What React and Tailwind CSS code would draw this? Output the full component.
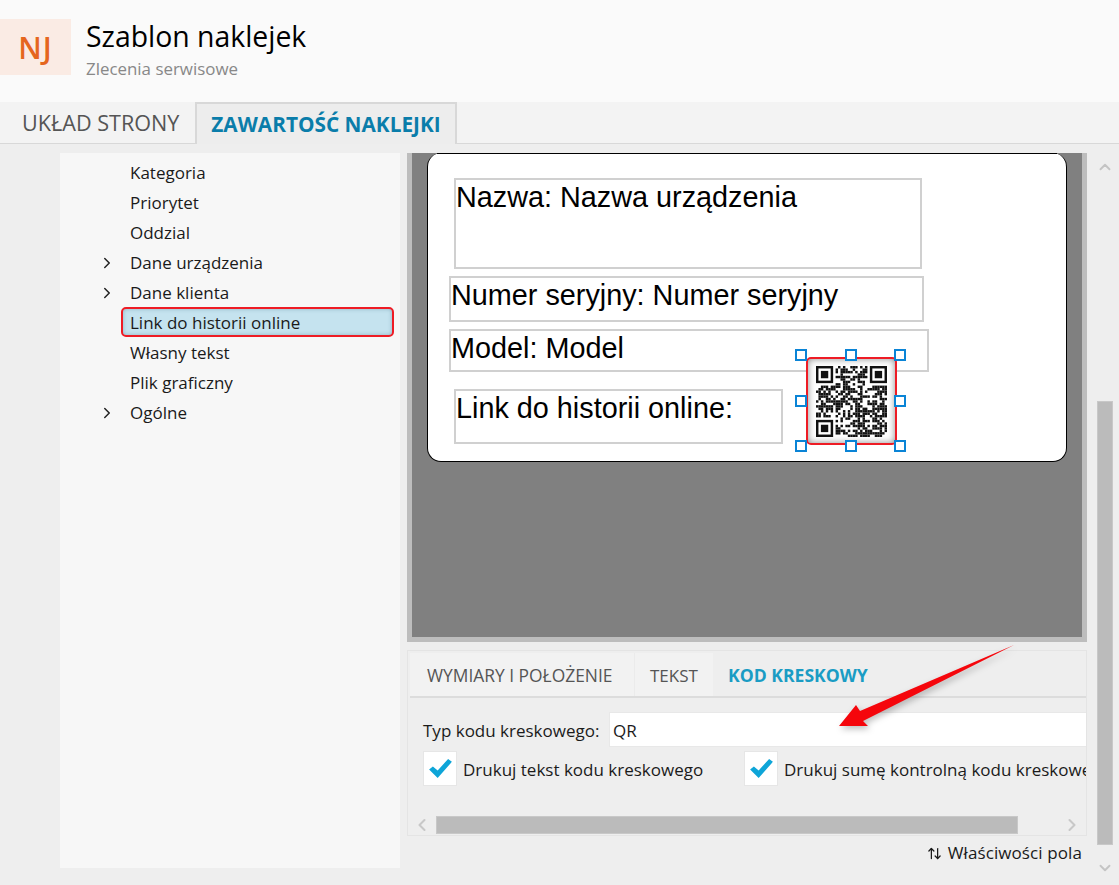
import { ChevronRight, ChevronLeft, ChevronUp, ChevronDown, ArrowUpDown } from "lucide-react";

const TREE = [
  { label: "Kategoria" },
  { label: "Priorytet" },
  { label: "Oddzial" },
  { label: "Dane urządzenia", arrow: true },
  { label: "Dane klienta", arrow: true },
  { label: "Link do historii online", selected: true },
  { label: "Własny tekst" },
  { label: "Plik graficzny" },
  { label: "Ogólne", arrow: true },
];

const FIELDS = [
  { text: "Nazwa: Nazwa urządzenia", cls: "left-[42px] top-[25px] w-[468px] h-[91px]" },
  { text: "Numer seryjny: Numer seryjny", cls: "left-[37px] top-[123px] w-[475px] h-[46px]" },
  { text: "Model: Model", cls: "left-[37px] top-[176px] w-[480px] h-[43px]" },
  { text: "Link do historii online:", cls: "left-[42px] top-[236px] w-[329px] h-[55px]" },
];

const HANDLES = [
  "left-[383px] top-[196px]", "left-[433px] top-[196px]", "left-[482px] top-[196px]",
  "left-[383px] top-[242px]", "left-[482px] top-[242px]",
  "left-[383px] top-[287px]", "left-[433px] top-[287px]", "left-[482px] top-[287px]",
];

// QR modules: fixed finder squares, noise for the rest
function qrModules() {
  const size = 29;
  const cells = [];
  let seed = 73;
  const inFinder = (x, y) =>
    (x < 8 && y < 8) || (x > 20 && y < 8) || (x < 8 && y > 20);
  for (let y = 0; y < size; y++) {
    for (let x = 0; x < size; x++) {
      seed = (seed * 1103515245 + 12345) & 0x7fffffff;
      const on = ((seed >> 16) & 255) < 135 + (x > 14 && y > 12 ? 30 : 0);
      if (!inFinder(x, y) && on) cells.push([x, y]);
    }
  }
  return cells;
}

function Finder({ x, y }) {
  return (
    <g>
      <rect x={x + 0.5} y={y + 0.5} width="6" height="6" fill="none" stroke="#111" strokeWidth="1" />
      <rect x={x + 2} y={y + 2} width="3" height="3" fill="#111" />
    </g>
  );
}

function QrCode() {
  return (
    <svg viewBox="0 0 29 29" className="w-[71px] h-[71px] blur-[0.5px]">
      {qrModules().map(([x, y]) => (
        <rect key={`${x}-${y}`} x={x} y={y} width="1" height="1" fill="#111" />
      ))}
      <Finder x={0} y={0} />
      <Finder x={22} y={0} />
      <Finder x={0} y={22} />
    </svg>
  );
}

function Check() {
  return (
    <div className="w-[34px] h-[35px] bg-white border border-[#e6e6e6] flex items-center justify-center shrink-0">
      <svg viewBox="0 0 24 20" className="w-[23px] h-[19px]">
        <path d="M0 11 L4 8 L9 12 L20 0 L24 3 L9 20 Z" fill="#0ea5d8" />
      </svg>
    </div>
  );
}

function Sticker() {
  return (
    <div className="relative h-full bg-[#808080] overflow-hidden">
      <div className="absolute left-[15px] top-0 w-[640px] h-[309px] bg-white border border-black border-t-0 rounded-[14px]" />
      <div className="absolute left-[25px] top-0 w-[620px] h-[1px] bg-black" />
      {FIELDS.map((f) => (
        <div
          key={f.text}
          className={`absolute ${f.cls} border-2 border-[#d0d0d0] pt-[2px] text-[28.8px] leading-[31px] text-black font-['Liberation_Sans',sans-serif] whitespace-nowrap`}
        >
          {f.text}
        </div>
      ))}
      <div className="absolute left-[394px] top-[204px] w-[91px] h-[88px] bg-white border-2 border-[#ee1c25] rounded-[5px] flex items-center justify-center shadow-[inset_0_0_7px_#8a8a8a]">
        <QrCode />
      </div>
      {HANDLES.map((h) => (
        <div key={h} className={`absolute ${h} w-[12px] h-[12px] bg-white border-2 border-[#0a84d6]`} />
      ))}
    </div>
  );
}

function BottomPanel() {
  return (
    <div className="h-[186px] border border-[#e4e4e4] flex flex-col overflow-hidden text-[#1b1b1b]">
      <div className="h-[47px] pt-[2px] flex border-b-2 border-[#dcdcdc] text-[17.4px] ml-[2px] shrink-0">
        <div className="w-[224px] bg-[#f2f2f2] flex items-center pl-[17px] pt-[2px] text-[#555] whitespace-nowrap">
          WYMIARY I POŁOŻENIE
        </div>
        <div className="w-[79px] bg-[#f2f2f2] flex items-center pl-[15px] pt-[2px] text-[#555] text-[17px] border-l border-[#ebebeb]">TEKST</div>
        <div className="flex items-center pl-[15px] pt-[2px] font-bold text-[#1a9cc4] whitespace-nowrap text-[17.6px]">KOD KRESKOWY</div>
      </div>
      <div className="flex-1 overflow-hidden pl-[15px] pt-[14px]">
        <div className="flex items-center h-[35px]">
          <span className="text-[17px] w-[186px] shrink-0 whitespace-nowrap pt-[2px]">Typ kodu kreskowego:</span>
          <div className="w-[500px] h-[35px] bg-white border border-[#e8e8e8] flex items-center pl-[3px] pt-[2px] text-[17px] shrink-0">QR</div>
        </div>
        <div className="flex items-center mt-[4px] text-[17px] whitespace-nowrap">
          <div className="flex items-center w-[321px] shrink-0">
            <Check />
            <span className="ml-[6px] pt-[2px]">Drukuj tekst kodu kreskowego</span>
          </div>
          <Check />
          <span className="ml-[6px] pt-[2px]">Drukuj sumę kontrolną kodu kreskowego</span>
        </div>
      </div>
      <div className="h-[18px] flex items-center mb-[1px] text-[#c8c8c8] shrink-0">
        <div className="w-[28px] flex justify-center"><ChevronLeft size={20} strokeWidth={2.5} /></div>
        <div className="w-[582px] h-[18px] bg-[#bbbbbb] border border-[#c8c8c8]" />
        <div className="flex-1 flex justify-end pr-[4px]"><ChevronRight size={20} strokeWidth={2.5} /></div>
      </div>
    </div>
  );
}

export default function App() {
  return (
    <div className="relative h-[885px] overflow-hidden bg-[#eeeeee] flex flex-col font-['Open_Sans',sans-serif]">
      {/* header */}
      <div className="h-[102px] bg-[#fafafa] flex items-start pt-[19px] shrink-0">
        <div className="w-[71px] h-[56px] bg-[#faebe4] flex items-center justify-center text-[30px] tracking-[1px] font-semibold text-[#e5661e]">
          NJ
        </div>
        <div className="ml-[15px] -mt-[3px]">
          <div className="text-[28.4px] leading-[40px] text-black">Szablon naklejek</div>
          <div className="text-[16.9px] leading-[22px] text-[#888888] mt-[2px]">Zlecenia serwisowe</div>
        </div>
      </div>

      {/* main tabs */}
      <div className="h-[42px] bg-[#f3f3f3] border-b border-[#d8d8d8] flex shrink-0">
        <div className="w-[195px] pl-[22px] pt-[2px] flex items-center text-[21.6px] text-[#555] whitespace-nowrap">UKŁAD STRONY</div>
        <div className="w-[262px] h-[42px] bg-[#ededed] border-2 border-b-0 border-[#d8d8d8] pt-[1px] flex items-center justify-center text-[20.8px] font-bold text-[#0a7daa] whitespace-nowrap">
          ZAWARTOŚĆ NAKLEJKI
        </div>
      </div>

      <div className="relative flex-1 flex pl-[60px] pt-[9px]">
        {/* tree */}
        <div className="w-[340px] h-[715px] bg-[#f7f7f7] pt-[5px] shrink-0">
          {TREE.map((t) => (
            <div key={t.label} className="h-[30px] flex items-center text-[17px] text-[#1a1a1a] relative">
              {t.arrow && (
                <ChevronRight size={18} strokeWidth={2} className="absolute left-[38px] text-[#222]" />
              )}
              {t.selected ? (
                <div className="ml-[61px] mb-[2px] w-[273px] h-[30px] pl-[7px] pt-[2px] flex items-center bg-[#c5e3ef] border-2 border-[#ee1c25] rounded-[5px] shadow-[inset_0_0_4px_#8fb4c4]">
                  {t.label}
                </div>
              ) : (
                <span className="ml-[70px]">{t.label}</span>
              )}
            </div>
          ))}
        </div>

        {/* canvas + properties */}
        <div className="ml-[7px] w-[680px] shrink-0 flex flex-col">
          <div className="h-[489px] border-[5px] border-t-0 border-[#bdbdbd]">
            <Sticker />
          </div>
          <div className="mt-[8px]">
            <BottomPanel />
          </div>
          <div className="flex items-center justify-end h-[34px] pr-[5px] text-[17px] text-[#1a1a1a]">
            <ArrowUpDown size={15} className="mr-[6px]" />
            <span className="tracking-[0.1px]">Właściwości pola</span>
          </div>
        </div>

        {/* vertical scrollbar */}
        <div className="ml-[10px] w-[16px] flex flex-col items-center text-[#c4c4c4]">
          <ChevronUp size={18} strokeWidth={2.5} className="mt-[5px]" />
          <div className="w-[16px] h-[444px] mt-[225px] bg-[#bbbbbb] border border-[#c8c8c8] shrink-0" />
          <ChevronDown size={18} strokeWidth={2.5} className="mt-[14px]" />
        </div>
      </div>

      {/* annotation arrow */}
      <svg className="absolute left-0 top-0 w-[1119px] h-[885px] pointer-events-none drop-shadow-[2px_3px_3px_rgba(0,0,0,0.25)]" viewBox="0 0 1119 885">
        <path d="M1014 645 L860 711 L856 705 L839 726 L868 726 L863 721 Z" fill="#f5060c" />
      </svg>
    </div>
  );
}
